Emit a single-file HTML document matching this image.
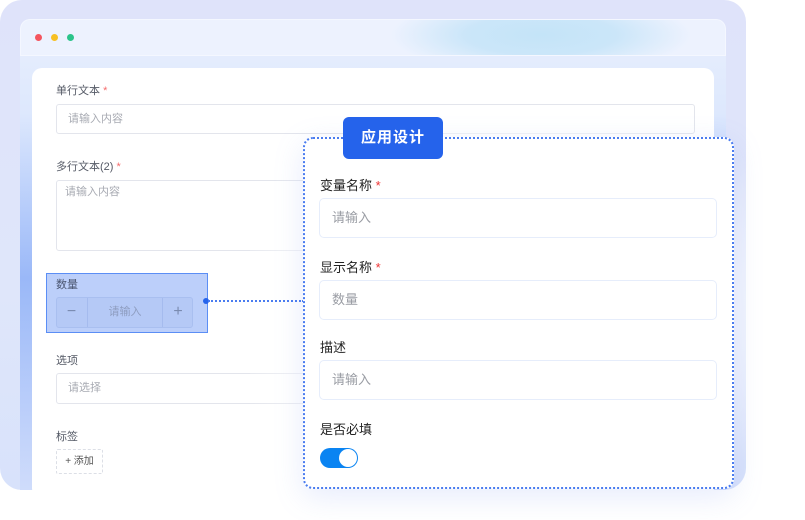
<!DOCTYPE html>
<html><head><meta charset="utf-8"><style>
*{box-sizing:border-box;margin:0;padding:0}
body{width:805px;height:520px;background:#fff;position:relative;overflow:hidden;font-family:"Liberation Sans","Noto Sans CJK SC",sans-serif}
.outer{position:absolute;left:0;top:0;width:746px;height:490px;border-radius:22px;background:linear-gradient(180deg,#dfe3fa 0%,#dfe6fa 60%,#d8e2fb 100%)}
.win{position:absolute;left:20px;top:19px;width:706px;height:471px;border-radius:10px 10px 0 0;overflow:hidden;background:linear-gradient(180deg,#e9effd 0%,#dde8fd 20%,#9ab8f8 55%,#cfdcfb 100%)}
.hdr{position:absolute;left:0;top:0;width:706px;height:37px;background:radial-gradient(ellipse 150px 40px at 520px 15px,#c4e4f8 0%,#cbe6f9 50%,rgba(236,242,254,0) 100%),#edf2fe;border:1.5px solid #f4f7ff;border-radius:10px 10px 0 0}
.dot{position:absolute;top:14px;width:7px;height:7px;border-radius:50%}
.card{position:absolute;left:12px;top:49px;width:682px;height:430px;background:#fff;border-radius:10px}
.lbl{position:absolute;font-size:11px;color:#555a66}
.lbl b{color:#f56c6c;font-weight:normal}
.inp{position:absolute;border:1px solid #e3e5ec;border-radius:3px;font-size:11px;color:#a8abb3;padding-left:11px}
.fade{position:absolute;left:250px;top:110px;width:560px;height:410px;background:radial-gradient(ellipse 300px 230px at 270px 200px,rgba(255,255,255,1) 55%,rgba(255,255,255,0) 100%)}
.pop{position:absolute;left:303px;top:137px;width:431px;height:352px;background:#fff;border:2px dotted #4a7cf0;border-radius:10px;box-shadow:0 8px 30px rgba(120,150,240,.18)}
.tab{position:absolute;left:343px;top:117px;width:100px;height:42px;background:#2563eb;border-radius:6px;color:#fff;font-size:15px;font-weight:bold;text-align:center;line-height:41px;letter-spacing:1px}
.pl{position:absolute;left:320px;font-size:13px;color:#222}
.pl b{color:#e33;font-weight:normal}
.pi{position:absolute;left:319px;width:398px;height:40px;border:1.5px solid #e6edfb;border-radius:5px;font-size:13px;color:#9a9da4;padding-left:12px;line-height:38px}
</style></head><body>
<div class="outer"></div>
<div class="win">
 <div class="hdr">
  <div class="dot" style="left:14px;background:#f4555e"></div>
  <div class="dot" style="left:30px;background:#f7c023"></div>
  <div class="dot" style="left:46px;background:#2bc48a"></div>
 </div>
 <div class="card"></div>
</div>
<div class="lbl" style="left:56px;top:82px">单行文本 <b>*</b></div>
<div class="inp" style="left:56px;top:104px;width:639px;height:30px;line-height:28px">请输入内容</div>
<div class="lbl" style="left:56px;top:158px">多行文本(2) <b>*</b></div>
<div class="inp" style="left:56px;top:180px;width:300px;height:71px;padding-left:8px;line-height:22px">请输入内容</div>
<div class="lbl" style="left:56px;top:352px">选项</div>
<div class="inp" style="left:56px;top:373px;width:300px;height:31px;line-height:29px">请选择</div>
<div class="lbl" style="left:56px;top:428px">标签</div>
<div style="position:absolute;left:56px;top:449px;width:47px;height:25px;border:1px dashed #dcdfe6;border-radius:2px;font-size:10px;color:#555;text-align:center;line-height:23px">+ 添加</div>
<div class="fade"></div>
<div style="position:absolute;left:46px;top:273px;width:162px;height:60px;background:#bccffa;border:1.5px solid #5b8ef5"></div>
<div class="lbl" style="left:56px;top:276px;color:#4a5570">数量</div>
<div style="position:absolute;left:56px;top:297px;width:137px;height:31px;border:1px solid #a9bff0;border-radius:3px;background:#b5c9f6"></div>
<div style="position:absolute;left:87px;top:298px;width:1px;height:29px;background:#a5bbee"></div>
<div style="position:absolute;left:162px;top:298px;width:1px;height:29px;background:#a5bbee"></div>
<div style="position:absolute;left:56px;top:297px;width:31px;height:31px;text-align:center;line-height:30px;font-size:16px;color:#7a8bb0">−</div>
<div style="position:absolute;left:163px;top:297px;width:30px;height:31px;text-align:center;line-height:30px;font-size:16px;color:#7a8bb0">+</div>
<div style="position:absolute;left:88px;top:297px;width:74px;height:31px;text-align:center;line-height:31px;font-size:11px;color:#8e9dc0">请输入</div>
<div style="position:absolute;left:203px;top:298px;width:6px;height:6px;border-radius:50%;background:#2563eb"></div>
<div style="position:absolute;left:208px;top:300px;width:96px;border-top:2px dotted #4a7cf0"></div>
<div class="pop"></div>
<div class="tab">应用设计</div>
<div class="pl" style="top:175px">变量名称 <b>*</b></div>
<div class="pi" style="top:198px">请输入</div>
<div class="pl" style="top:257px">显示名称 <b>*</b></div>
<div class="pi" style="top:280px">数量</div>
<div class="pl" style="top:337px">描述</div>
<div class="pi" style="top:360px">请输入</div>
<div class="pl" style="top:419px">是否必填</div>
<div style="position:absolute;left:320px;top:448px;width:38px;height:20px;border-radius:10px;background:#0a84f2"></div>
<div style="position:absolute;left:339px;top:449px;width:18px;height:18px;border-radius:50%;background:#fff"></div>
</body></html>
